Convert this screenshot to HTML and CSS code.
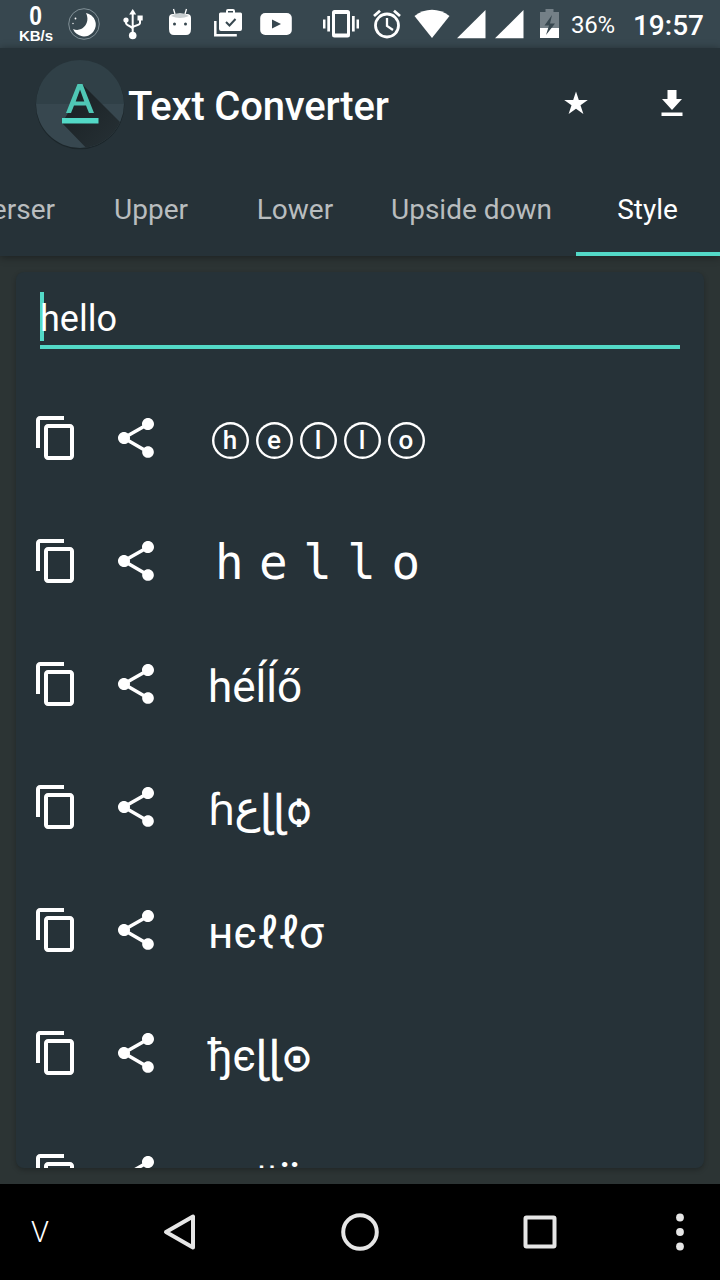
FILE: index.html
```html
<!DOCTYPE html>
<html lang="en">
<head>
<meta charset="utf-8">
<title>Text Converter</title>
<link rel="stylesheet" href="styles.css">
</head>
<body>
<svg class="defs" aria-hidden="true">
  <symbol id="copy" viewBox="0 0 24 24"><path d="M16 1H4c-1.1 0-2 .9-2 2v14h2V3h12V1zm3 4H8c-1.1 0-2 .9-2 2v14c0 1.100.9 2 2 2h11c1.100 0 2-.9 2-2V7c0-1.100-.9-2-2-2zm0 16H8V7h11v14z"/></symbol>
  <symbol id="share" viewBox="0 0 24 24"><path d="M18 16.080c-.76 0-1.440.3-1.960.770L8.910 12.700c.05-.23.09-.46.09-.7s-.04-.47-.09-.7l7.050-4.110c.54.5 1.250.810 2.040.810 1.660 0 3-1.340 3-3s-1.340-3-3-3-3 1.340-3 3c0 .24.04.47.09.7L8.040 9.810C7.500 9.310 6.790 9 6 9c-1.660 0-3 1.340-3 3s1.340 3 3 3c.79 0 1.500-.31 2.040-.81l7.120 4.160c-.05.21-.08.43-.08.650 0 1.610 1.310 2.920 2.920 2.920s2.920-1.310 2.920-2.920-1.310-2.920-2.920-2.920z"/></symbol>
</svg>
<header class="status">
  <div class="speed"><span class="speed-value">0</span><span class="speed-unit">KB/s</span></div>
  <svg class="moon" viewBox="68 0 32 48"><circle cx="84" cy="24" r="15.300" fill="none" stroke="#819097"/><path d="M86 13A11.800 11.800 0 1 1 73 29C82 33 91 23 86 13Z"/><circle cx="75.500" cy="18.500" r=".9"/><circle cx="73" cy="23.500" r=".7"/></svg>
  <svg class="usb" viewBox="122 0 22 48"><path d="M132.700 9l3.500 5.500h-7z"/><circle cx="132.700" cy="35.500" r="3.800"/><circle cx="126" cy="20" r="2.600"/><path d="M137.500 15.500h5.200v5h-5.200z"/><path d="M132.700 13v22M126 20v3c0 3 6.700 3 6.700 6M140 19v4c0 3-7.300 2-7.300 5" fill="none" stroke="#fff" stroke-width="2"/></svg>
  <svg class="droid" viewBox="168 0 24 48"><path d="M169 18q0-4 4-4h14q4 0 4 4v11q0 6-5 6h-12q-5 0-5-6z"/><path d="M171 16q9-6 18 0q-9 4-18 0" fill="#c8ced0"/><path d="M175 14l-1.500-5M185 14l1.500-5" stroke="#fff" stroke-width="1.300"/><circle cx="174.500" cy="24" r="1.500" fill="#37474f"/><circle cx="185.500" cy="24" r="1.500" fill="#37474f"/></svg>
  <svg class="shop" viewBox="213 0 30 48"><path fill-rule="evenodd" d="M219 14q0-1.500 1.500-1.500h5.500V11q0-2 2-2h5q2 0 2 2v1.500h5.500q1.500 0 1.500 1.500v15q0 2-2 2h-19q-2 0-2-2zM228 12.500h5V11h-5z"/><path d="M215.300 21v14.300h21.500" fill="none" stroke="#fff" stroke-width="2.500"/><path d="M226 22l3.500 3.500 6-6.500" fill="none" stroke="#37474f" stroke-width="2"/></svg>
  <svg class="tube" viewBox="260 0 32 48"><rect x="260.200" y="13" width="31.600" height="22" rx="5"/><path d="M272 19.500l9 4.500-9 4.500z" fill="#37474f"/></svg>
  <svg class="vibrate" viewBox="322 0 38 48"><path fill-rule="evenodd" d="M334.500 10h13q2.500 0 2.500 2.500v22.500q0 2.500-2.500 2.500h-13q-2.500 0-2.500-2.500V12.500q0-2.500 2.500-2.500zM335 14v19.500h12V14z"/><path d="M323 19.500h2.500v9H323zM327.300 16h2.700v15.500h-2.700zM352 16h2.700v15.500H352zM356.500 19.500h2.500v9h-2.500z"/></svg>
  <svg class="alarm" viewBox="372 0 30 48"><g fill="none" stroke="#fff"><circle cx="387" cy="25.500" r="11.500" stroke-width="2.800"/><path d="M387 18v8l6 4" stroke-width="2.300"/><path d="M374 16l6-5.200M400 16l-6-5.200" stroke-width="2.800"/></g></svg>
  <svg class="wifi" viewBox="414 0 36 48"><path d="M414.500 16C425 7.700 439 7.700 449.500 16L432 38z"/></svg>
  <svg class="signal first" viewBox="457 0 30 48"><path d="M457 38.300L485.500 10v28.300z"/></svg>
  <svg class="signal" viewBox="495 0 30 48"><path d="M495 38.300L523.500 10v28.300z"/></svg>
  <svg class="battery" viewBox="540 0 19 48"><path d="M545.500 9h8v3h5.500v16h-19V12h5.500z" fill="#748087"/><path d="M540 28h19v10h-19z"/><path d="M552 15l-7.500 10.500h4.500L546 35l9-11.500h-5z" fill="#37474f"/></svg>
  <span class="percent">36%</span>
  <span class="clock">19:57</span>
</header>

<div class="appbar">
  <div class="toolbar">
    <svg class="logo" viewBox="0 0 96 96">
      <defs>
        <linearGradient id="cast" x1="0" y1="0" x2="1" y2="1"><stop offset="0" stop-color="#191f22"/><stop offset="1" stop-color="#283338"/></linearGradient>
        <clipPath id="disc"><circle cx="48" cy="46" r="44"/></clipPath>
      </defs>
      <circle cx="48" cy="47" r="44.300" fill="#1c262a"/>
      <g clip-path="url(#disc)">
        <path d="M0 0h96v46H0z" fill="#304047"/><path d="M0 46h96v48H0z" fill="#37474f"/>
        <path d="M51 27L96 72V96H60L30 65 36 55z" fill="url(#cast)"/>
      </g>
      <path fill-rule="evenodd" d="M45.500 26h5L62 55h-5l-3-7.500H42L39 55h-5zM48 31.500L43.700 43.500h8.600z" fill="#4fc7b5"/>
      <path d="M30 60h36.500v5.500H30z" fill="#53d9c7"/>
    </svg>
    <h1 class="title">Text Converter</h1>
    <svg class="star" viewBox="0 0 24 24"><path d="M12 .5l2.800 8.400h9L16.500 14.200l2.900 8.800L12 17.700 4.600 23l2.900-8.800L.2 8.900h9z"/></svg>
    <svg class="download" viewBox="0 0 22 26"><path d="M6.500 0h9v9H21L11 20 1 9h5.500zM.5 22.500h21V26H.5z"/></svg>
  </div>
  <nav class="tabs">
    <span class="tab reverser">Reverser</span>
    <span class="tab">Upper</span>
    <span class="tab">Lower</span>
    <span class="tab wide">Upside down</span>
    <span class="tab active">Style</span>
  </nav>
</div>

<main class="content">
  <section class="card">
    <div class="field"><i class="caret"></i>hello</div>
    <ul class="styles">
      <li class="row"><svg><use href="#copy"/></svg><svg><use href="#share"/></svg><p class="sample circled"><span>h</span><span>e</span><span>l</span><span>l</span><span>o</span></p></li>
      <li class="row"><svg><use href="#copy"/></svg><svg><use href="#share"/></svg><p class="sample"><span class="spaced">hello</span></p></li>
      <li class="row"><svg><use href="#copy"/></svg><svg><use href="#share"/></svg><p class="sample">héĺĺő</p></li>
      <li class="row"><svg><use href="#copy"/></svg><svg><use href="#share"/></svg><p class="sample"><bdo dir="ltr">ɦ<span class="ain">ع</span><span class="hook">ɭɭ</span>ѻ</bdo></p></li>
      <li class="row"><svg><use href="#copy"/></svg><svg><use href="#share"/></svg><p class="sample">нєℓℓσ</p></li>
      <li class="row"><svg><use href="#copy"/></svg><svg><use href="#share"/></svg><p class="sample">ђє<span class="hook">ɭɭ</span><span class="dotted">⊙</span></p></li>
      <li class="row"><svg><use href="#copy"/></svg><svg><use href="#share"/></svg><p class="sample">нε<span class="low">ll</span><span class="last">ö</span></p></li>
    </ul>
  </section>
</main>

<footer class="navbar">
  <span class="hide">V</span>
  <svg class="back" viewBox="0 0 36 40"><path d="M31 4.500v31L4 20z"/></svg>
  <svg class="home" viewBox="0 0 40 40"><circle cx="20" cy="20" r="16.800"/></svg>
  <svg class="recent" viewBox="0 0 36 36"><rect x="3.500" y="3.500" width="29" height="29" rx="1"/></svg>
  <svg class="more" viewBox="0 0 10 40"><circle cx="5" cy="5.500" r="3.900"/><circle cx="5" cy="20" r="3.900"/><circle cx="5" cy="34.500" r="3.900"/></svg>
</footer>
</body>
</html>
```
FILE: styles.css
```css
* { box-sizing: border-box; margin: 0; padding: 0; }
body {
  width: 720px;
  height: 1280px;
  overflow: hidden;
  display: flex;
  flex-direction: column;
  background: #2c3434;
  color: #fff;
  font-family: Roboto, "Noto Sans", "DejaVu Sans", sans-serif;
}
svg { display: block; flex: none; fill: #fff; }
.defs { position: absolute; width: 0; height: 0; }

.status { height: 48px; flex: none; display: flex; background: #37474f; }
.status svg { height: 48px; }
.speed {
  width: 36px;
  margin-left: 18px;
  padding-top: 4px;
  display: flex;
  flex-direction: column;
  align-items: center;
  font-family: "Liberation Sans", sans-serif;
  font-weight: 700;
}
.speed-value { font-size: 27px; line-height: 25px; transform: scaleX(.85); }
.speed-unit { font-size: 15px; line-height: 14px; }
.moon { width: 32px; margin-left: 14px; }
.usb { width: 22px; margin-left: 22px; }
.droid { width: 24px; margin-left: 24px; }
.shop { width: 30px; margin-left: 21px; }
.tube { width: 32px; margin-left: 17px; }
.vibrate { width: 38px; margin-left: 30px; }
.alarm { width: 30px; margin-left: 12px; }
.wifi { width: 36px; margin-left: 12px; }
.signal { width: 30px; margin-left: 8px; }
.signal.first { margin-left: 7px; }
.battery { width: 19px; margin-left: 15px; }
.percent { margin-left: 12px; width: 50px; font-size: 24px; line-height: 50px; letter-spacing: -.3px; }
.clock { flex: 1; padding-right: 16px; text-align: right; font-size: 28px; font-weight: 500; line-height: 51px; }

.appbar {
  height: 208px;
  flex: none;
  background: #263238;
  box-shadow: 0 1px 8px rgba(0, 0, 0, .4);
  position: relative;
}
.toolbar { height: 112px; display: flex; align-items: center; padding-left: 32px; }
.logo { width: 96px; height: 96px; margin-bottom: -4px; }
.title { width: 436px; font-size: 40px; font-weight: 500; line-height: 48px; padding-top: 6px; letter-spacing: -.2px; }
.star { width: 24px; height: 24px; margin-top: -2px; }
.download { width: 22px; height: 26px; margin-left: 73px; margin-top: -2px; }
.tabs { height: 96px; display: flex; justify-content: flex-end; overflow: hidden; }
.tab {
  flex: none;
  width: 144px;
  padding-top: 1px;
  text-align: center;
  font-size: 28px;
  line-height: 98px;
  color: #b9bdbf;
}
.tab.reverser { padding-right: 24px; text-align: right; }
.tab.wide { width: 209px; }
.tab.active { color: #fff; border-bottom: 4px solid #53d9c7; height: 96px; padding-right: 1px; }

.content { flex: 1; min-height: 0; padding: 16px; }
.card {
  height: 896px;
  overflow: hidden;
  border-radius: 8px;
  background: #263238;
  box-shadow: 0 2px 5px rgba(0, 0, 0, .25);
}
.field {
  position: relative;
  z-index: 0;
  height: 57px;
  margin: 20px 24px 0;
  border-bottom: 4px solid #53d9c7;
  font-size: 36px;
  line-height: 54px;
}
.caret { position: absolute; left: 0; top: 0; width: 4px; height: 49px; background: #53d9c7; z-index: -1; }
.styles { list-style: none; margin-top: 27px; }
.row { height: 123px; display: flex; align-items: center; padding-left: 16px; }
.row svg { width: 48px; height: 48px; margin-right: 32px; }
.sample { margin-left: 16px; padding-top: 6px; font-size: 44px; line-height: 52px; white-space: nowrap; }
.circled { display: flex; gap: 7px; padding: 5px 0 0 3.500px; font-size: 26px; font-weight: 500; }
.circled span {
  width: 37px;
  height: 37px;
  box-shadow: inset 0 0 0 2.400px #fff;
  border-radius: 50%;
  text-align: center;
  line-height: 36px;
}
.spaced { font-family: "DejaVu Sans Mono", monospace; font-size: 47.500px; letter-spacing: 15.500px; line-height: 0; margin-left: 7px; }
.ain { font-family: "DejaVu Sans", sans-serif; position: relative; top: -3px; line-height: 0; margin-left: -1px; }
.hook { letter-spacing: 2.200px; font-size: 42px; line-height: 0; -webkit-text-stroke: .6px #fff; }
.dotted { font-family: "DejaVu Sans", sans-serif; font-size: 38px; font-weight: 700; line-height: 0; margin-left: -1px; }
.low { font-size: 35px; letter-spacing: 2px; }
.last { position: relative; top: 2px; left: -1px; line-height: 0; font-weight: 500; }

.navbar { height: 96px; flex: none; display: flex; align-items: center; background: #000; }
.navbar svg { fill: none; stroke: #e6e6e6; stroke-width: 4; stroke-linejoin: round; }
.hide { width: 20px; margin-left: 30px; text-align: center; font-size: 29px; font-weight: 300; }
.back { width: 36px; height: 40px; margin-left: 112px; }
.home { width: 40px; height: 40px; margin-left: 142px; }
.recent { width: 36px; height: 36px; margin-left: 142px; }
.navbar .more { width: 10px; height: 40px; margin-left: 117px; fill: #e6e6e6; stroke: none; }
```
